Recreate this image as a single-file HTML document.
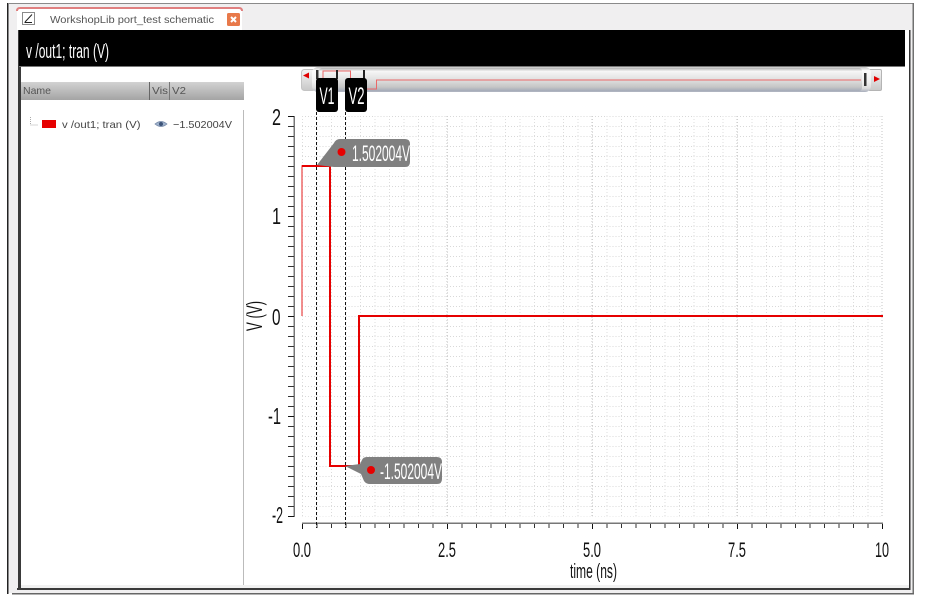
<!DOCTYPE html>
<html>
<head>
<meta charset="utf-8">
<style>
html,body{margin:0;padding:0;background:#fff}
body{width:938px;height:601px;overflow:hidden;position:relative}
svg{position:absolute;left:0;top:0;display:block}
text{font-family:"Liberation Sans",sans-serif}
</style>
</head>
<body>
<svg width="938" height="601" viewBox="0 0 938 601" xmlns="http://www.w3.org/2000/svg">
<defs>
<linearGradient id="hdr" x1="0" y1="0" x2="0" y2="1"><stop offset="0" stop-color="#d2d2d2"/><stop offset="1" stop-color="#a4a4a4"/></linearGradient>
<linearGradient id="bar" x1="0" y1="0" x2="0" y2="1"><stop offset="0" stop-color="#b0b0b0"/><stop offset=".14" stop-color="#f6f6f6"/><stop offset=".45" stop-color="#e4e4e4"/><stop offset=".82" stop-color="#c6c6c6"/><stop offset="1" stop-color="#a4aab8"/></linearGradient>
<linearGradient id="cap" x1="0" y1="0" x2="0" y2="1"><stop offset="0" stop-color="#c4c4c4"/><stop offset=".14" stop-color="#fbfbfb"/><stop offset=".6" stop-color="#f0f0f0"/><stop offset=".85" stop-color="#dcdcdc"/><stop offset="1" stop-color="#a8aebc"/></linearGradient>
<linearGradient id="btn" x1="0" y1="0" x2="0" y2="1"><stop offset="0" stop-color="#f4f4f4"/><stop offset="1" stop-color="#c8c8c8"/></linearGradient>
<pattern id="g" x="302" y="116" width="14.5" height="10" patternUnits="userSpaceOnUse">
<line x1="0" y1="0.5" x2="14.5" y2="0.5" stroke="#d8d8d8" stroke-width="1" stroke-dasharray="1 2"/>
<line x1="0.5" y1="0" x2="0.5" y2="10" stroke="#dcdcdc" stroke-width="1" stroke-dasharray="1 2"/>
</pattern>
</defs>

<!-- outer window -->
<rect x="8" y="4" width="905" height="589" fill="#f0eff0"/>
<rect x="7" y="3" width="1.5" height="591" fill="#222"/>
<rect x="8" y="3" width="906" height="1" fill="#8a8a8a"/>
<rect x="912.5" y="3" width="1.5" height="591" fill="#707070"/>
<rect x="12" y="593" width="902" height="1.5" fill="#666"/>

<!-- content -->
<rect x="21" y="66" width="888" height="522" fill="#fff"/>
<rect x="18" y="30" width="3" height="558" fill="#3a3a3a"/>
<rect x="17" y="588" width="893" height="2" fill="#3a3a3a"/>
<rect x="909" y="30" width="1.5" height="560" fill="#333"/>
<rect x="905" y="30" width="4" height="558" fill="#fff"/>
<rect x="21" y="585" width="888" height="3" fill="#f1f1f1"/>

<!-- tab -->
<path d="M17 30V11q0-3 3-3H239q3 0 3 3V30Z" fill="#fff"/>
<path d="M17 11q0-3 3-3H239q3 0 3 3" fill="none" stroke="#e08080" stroke-width="2"/>
<rect x="22.500" y="12.500" width="12" height="12" fill="#fff" stroke="#8a8a8a"/>
<path d="M24.500 22.500H32M32 14.500 25 22" fill="none" stroke="#222" stroke-width="1"/>
<text x="50" y="23" font-size="10.500" fill="#555" textLength="164" lengthAdjust="spacingAndGlyphs">WorkshopLib port_test schematic</text>
<rect x="227" y="13" width="13" height="13" rx="1.500" fill="#e8794a"/>
<path d="M231 17l5 5M236 17l-5 5" stroke="#fff" stroke-width="2"/>

<!-- title bar -->
<rect x="19" y="30" width="886" height="36" fill="#000"/>
<rect x="19" y="66" width="886" height="1" fill="#777"/>
<text x="26" y="58" font-size="20" fill="#fff" textLength="83" lengthAdjust="spacingAndGlyphs">v /out1; tran (V)</text>

<!-- list header -->
<rect x="21" y="82" width="223" height="18" fill="url(#hdr)"/>
<rect x="149" y="82" width="1" height="18" fill="#666"/>
<rect x="169" y="82" width="1" height="18" fill="#777"/>
<text x="23" y="94" font-size="10.500" fill="#555" textLength="28" lengthAdjust="spacingAndGlyphs">Name</text>
<text x="152" y="94" font-size="10.500" fill="#555" textLength="16" lengthAdjust="spacingAndGlyphs">Vis</text>
<text x="172" y="94" font-size="10.500" fill="#555" textLength="14" lengthAdjust="spacingAndGlyphs">V2</text>
<rect x="243" y="110" width="1" height="475" fill="#bbb"/>

<!-- list row -->
<path d="M30.500 117V125H38" fill="none" stroke="#aaa" stroke-width="1" stroke-dasharray="1 1"/>
<rect x="42" y="120" width="14" height="8" fill="#e60000"/>
<text x="62" y="128" font-size="10.500" fill="#444" textLength="78.500" lengthAdjust="spacingAndGlyphs">v /out1; tran (V)</text>
<path d="M155 124q6-5 12 0q-6 5-12 0Z" fill="#9fb2cc" stroke="#7487a6" stroke-width=".8"/>
<circle cx="161" cy="124" r="2" fill="#3d5478"/>
<text x="173" y="128" font-size="10.500" fill="#444" textLength="59" lengthAdjust="spacingAndGlyphs">−1.502004V</text>

<!-- scrollbar -->
<rect x="301.500" y="69.500" width="14" height="21" rx="3" fill="url(#btn)" stroke="#c4c4c4"/>
<path d="M303 75.500l6-3v6Z" fill="#e00000"/>
<rect x="868.500" y="69.500" width="13" height="21" rx="1.500" fill="url(#btn)" stroke="#b4b4b4"/>
<path d="M880 79l-6-3v6Z" fill="#e00000"/>
<rect x="312" y="67" width="559" height="25" rx="6" fill="url(#cap)"/>
<rect x="319" y="68" width="543" height="23" rx="3" fill="url(#bar)"/>
<rect x="864" y="73" width="2.500" height="13" fill="#333"/>
<rect x="316" y="70" width="2.500" height="9" fill="#333"/>
<path d="M323 79V71H350.500V89H376.500V80H861" fill="none" stroke="#ea6868" stroke-width="1"/>
<rect x="336" y="70" width="2" height="9" fill="#222"/>
<rect x="363" y="70" width="2" height="9" fill="#222"/>

<!-- grid -->
<rect x="302" y="116" width="580" height="400.500" fill="url(#g)"/>
<path d="M447 116V516M592 116V516M737 116V516M882 116V516" stroke="#c4c4c4" stroke-width="1" stroke-dasharray="1 2"/>

<!-- axes -->
<rect x="293.500" y="116" width="1.500" height="401" fill="#777"/>
<line x1="291" y1="116" x2="291" y2="517" stroke="#333" stroke-width="6" stroke-dasharray="1 9"/>
<line x1="288" y1="116.500" x2="294" y2="116.500" stroke="#111"/>
<line x1="288" y1="216.500" x2="294" y2="216.500" stroke="#111"/>
<line x1="288" y1="316.500" x2="294" y2="316.500" stroke="#111"/>
<line x1="288" y1="416.500" x2="294" y2="416.500" stroke="#111"/>
<line x1="288" y1="516.500" x2="294" y2="516.500" stroke="#111"/>
<rect x="302" y="522.500" width="581" height="1.500" fill="#777"/>
<line x1="302" y1="526" x2="883" y2="526" stroke="#333" stroke-width="4" stroke-dasharray="1 13.500"/>
<path d="M302.500 524V529M447.500 524V529M592.500 524V529M737.500 524V529M882.500 524V529" stroke="#111" stroke-width="1"/>

<!-- y labels -->
<text x="272" y="125" font-size="23" fill="#111" textLength="9" lengthAdjust="spacingAndGlyphs">2</text>
<text x="272" y="224" font-size="23" fill="#111" textLength="9" lengthAdjust="spacingAndGlyphs">1</text>
<text x="272" y="325" font-size="23" fill="#111" textLength="8.500" lengthAdjust="spacingAndGlyphs">0</text>
<text x="268" y="424" font-size="23" fill="#111" textLength="13" lengthAdjust="spacingAndGlyphs">-1</text>
<text x="272" y="523" font-size="23" fill="#111" textLength="11" lengthAdjust="spacingAndGlyphs">-2</text>
<text transform="translate(262 331) rotate(-90)" font-size="22" fill="#111" textLength="30" lengthAdjust="spacingAndGlyphs">V (V)</text>

<!-- x labels -->
<text x="293" y="557" font-size="21" fill="#111" textLength="18" lengthAdjust="spacingAndGlyphs">0.0</text>
<text x="438" y="557" font-size="21" fill="#111" textLength="18" lengthAdjust="spacingAndGlyphs">2.5</text>
<text x="583" y="557" font-size="21" fill="#111" textLength="18" lengthAdjust="spacingAndGlyphs">5.0</text>
<text x="728" y="557" font-size="21" fill="#111" textLength="18" lengthAdjust="spacingAndGlyphs">7.5</text>
<text x="875" y="557" font-size="21" fill="#111" textLength="14" lengthAdjust="spacingAndGlyphs">10</text>
<text x="570" y="578" font-size="20" fill="#111" textLength="47" lengthAdjust="spacingAndGlyphs">time (ns)</text>

<!-- trace -->
<path d="M302 316V166H330" fill="none" stroke="#ee6a6a" stroke-width="1.500"/>
<path d="M302 166H330V466H359V316H883" fill="none" stroke="#e60000" stroke-width="2"/>

<!-- cursors -->
<path d="M316.500 112V528M345.500 112V528" stroke="#111" stroke-width="1" stroke-dasharray="3 2"/>
<rect x="316" y="78" width="22" height="34" rx="3" fill="#000"/>
<rect x="345" y="78" width="22" height="34" rx="3" fill="#000"/>
<text x="319.500" y="104" font-size="24" fill="#fff" textLength="15" lengthAdjust="spacingAndGlyphs">V1</text>
<text x="348.500" y="104" font-size="24" fill="#fff" textLength="16" lengthAdjust="spacingAndGlyphs">V2</text>

<!-- tooltips -->
<path d="M317 165 334 143q2-4 6-4H405q5 0 5 5V162q0 5-5 5H338q-2 0-4 0Z" fill="#808080"/>
<circle cx="341.500" cy="152" r="4" fill="#e60000"/>
<text x="352" y="161" font-size="22" fill="#fff" textLength="58" lengthAdjust="spacingAndGlyphs">1.502004V</text>
<path d="M345 466 360 464 362 460q1-3 5-3H437q5 0 5 5V479q0 5-5 5H370q-4 0-6-3L361 474Z" fill="#808080"/>
<circle cx="371" cy="470" r="4" fill="#e60000"/>
<text x="380" y="479" font-size="22" fill="#fff" textLength="62" lengthAdjust="spacingAndGlyphs">-1.502004V</text>
</svg>
</body>
</html>
